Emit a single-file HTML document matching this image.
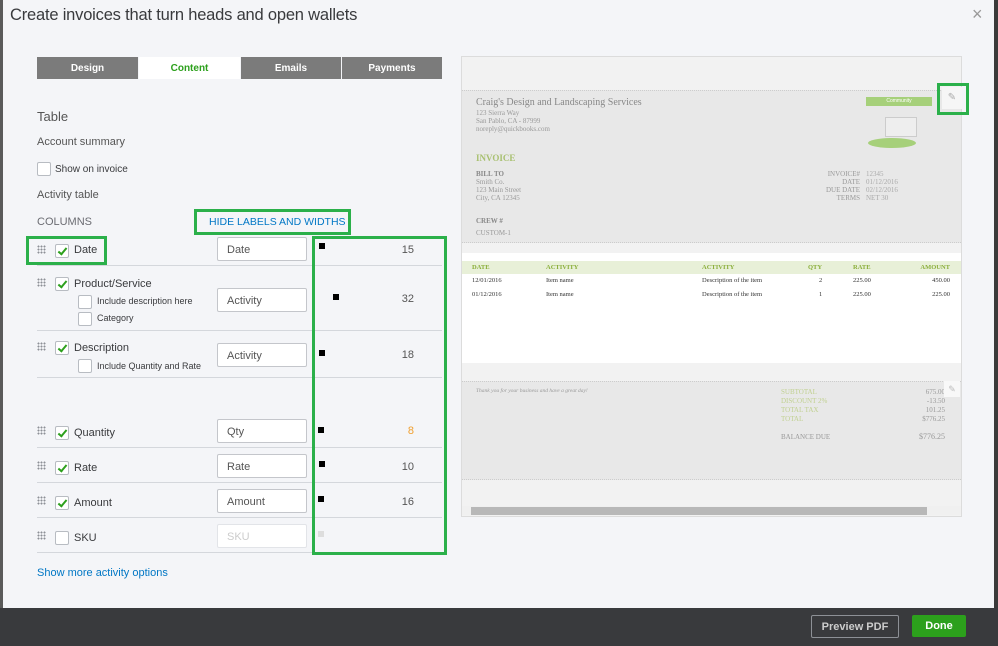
<!DOCTYPE html>
<html><head><meta charset="utf-8"><style>
*{box-sizing:border-box;margin:0;padding:0}
body{width:998px;height:646px;overflow:hidden;background:#f4f5f8;font-family:"Liberation Sans",sans-serif;position:relative;color:#393a3d}
.a{position:absolute}
.t{font-size:11px;color:#393a3d;white-space:nowrap}
.cb{position:absolute;width:14px;height:14px;border:1px solid #b8bcc2;background:#fff;border-radius:2px}
.cb.on::after{content:"";position:absolute;left:4px;top:1px;width:3px;height:7px;border:solid #2ca01c;border-width:0 2px 2px 0;transform:rotate(40deg)}
.drag{position:absolute;width:9px;height:9px;background-image:radial-gradient(circle,#8d9096 0.9px,transparent 1.1px);background-size:3px 3px}
.inp{position:absolute;left:217px;width:90px;height:24px;background:#fff;border:1px solid #c4c6cb;border-radius:2px;font-size:11px;color:#555;padding:6px 0 0 9px}
.sep{position:absolute;left:37px;width:405px;height:1px;background:#d4d7dc}
.sq{position:absolute;width:6px;height:6px;background:#000}
.num{position:absolute;left:380px;width:34px;text-align:right;font-size:11px;color:#555}
.gb{position:absolute;border:3px solid #2bb04a}
.sv{font-family:"Liberation Serif",serif;position:absolute;white-space:nowrap}
.tab{position:absolute;top:57px;height:22px;width:100px;background:#7b7b7b;color:#fff;text-align:center;font-size:10px;font-weight:bold;padding-top:6px}
</style></head><body>
<div class="a" style="left:0;top:0;width:3px;height:608px;background:#5a5a5a"></div>
<div class="a" style="left:994px;top:0;width:4px;height:608px;background:#3a3a3a"></div>
<div class="a" style="left:10px;top:6px;font-size:16.5px;color:#393a3d;letter-spacing:-0.2px">Create invoices that turn heads and open wallets</div>
<div class="a" style="left:972px;top:4px;font-size:18px;color:#999">×</div>

<div class="tab" style="left:37px;width:101px">Design</div>
<div class="tab" style="left:139px;width:101px;background:#fff;color:#2ca01c">Content</div>
<div class="tab" style="left:241px">Emails</div>
<div class="tab" style="left:342px">Payments</div>

<div class="a" style="left:37px;top:109px;font-size:13px;color:#555">Table</div>
<div class="a t" style="left:37px;top:136px;color:#555">Account summary</div>
<div class="cb" style="left:37px;top:162px"></div>
<div class="a t" style="left:55px;top:164px;font-size:10px">Show on invoice</div>
<div class="a t" style="left:37px;top:189px;color:#555">Activity table</div>
<div class="a t" style="left:37px;top:216px;color:#6b6c72">COLUMNS</div>
<div class="gb" style="left:194px;top:209px;width:157px;height:26px"></div>
<div class="a t" style="left:209px;top:216px;color:#0077c5;font-size:10.5px">HIDE LABELS AND WIDTHS</div>

<div class="gb" style="left:26px;top:236px;width:81px;height:29px"></div>
<div class="drag" style="left:37px;top:245px"></div>
<div class="cb on" style="left:55px;top:244px"></div>
<div class="a t" style="left:74px;top:244px">Date</div>
<div class="inp" style="top:237px">Date</div>
<div class="sq" style="left:319px;top:243px"></div><div class="num" style="top:244px">15</div>
<div class="sep" style="top:265px"></div>

<div class="drag" style="left:37px;top:278px"></div>
<div class="cb on" style="left:55px;top:277px"></div>
<div class="a t" style="left:74px;top:278px">Product/Service</div>
<div class="cb" style="left:78px;top:295px"></div>
<div class="a t" style="left:97px;top:296px;font-size:9px">Include description here</div>
<div class="cb" style="left:78px;top:312px"></div>
<div class="a t" style="left:97px;top:313px;font-size:9px">Category</div>
<div class="inp" style="top:288px">Activity</div>
<div class="sq" style="left:333px;top:294px"></div><div class="num" style="top:293px">32</div>
<div class="sep" style="top:330px"></div>

<div class="drag" style="left:37px;top:342px"></div>
<div class="cb on" style="left:55px;top:341px"></div>
<div class="a t" style="left:74px;top:342px">Description</div>
<div class="cb" style="left:78px;top:359px"></div>
<div class="a t" style="left:97px;top:361px;font-size:9px">Include Quantity and Rate</div>
<div class="inp" style="top:343px">Activity</div>
<div class="sq" style="left:319px;top:350px"></div><div class="num" style="top:349px">18</div>
<div class="sep" style="top:377px"></div>

<div class="drag" style="left:37px;top:426px"></div>
<div class="cb on" style="left:55px;top:426px"></div>
<div class="a t" style="left:74px;top:427px">Quantity</div>
<div class="inp" style="top:419px">Qty</div>
<div class="sq" style="left:318px;top:427px"></div><div class="num" style="top:425px;color:#f0a030">8</div>
<div class="sep" style="top:447px"></div>

<div class="drag" style="left:37px;top:461px"></div>
<div class="cb on" style="left:55px;top:461px"></div>
<div class="a t" style="left:74px;top:462px">Rate</div>
<div class="inp" style="top:454px">Rate</div>
<div class="sq" style="left:319px;top:461px"></div><div class="num" style="top:461px">10</div>
<div class="sep" style="top:482px"></div>

<div class="drag" style="left:37px;top:496px"></div>
<div class="cb on" style="left:55px;top:496px"></div>
<div class="a t" style="left:74px;top:497px">Amount</div>
<div class="inp" style="top:489px">Amount</div>
<div class="sq" style="left:318px;top:496px"></div><div class="num" style="top:496px">16</div>
<div class="sep" style="top:517px"></div>

<div class="drag" style="left:37px;top:531px"></div>
<div class="cb" style="left:55px;top:531px"></div>
<div class="a t" style="left:74px;top:532px">SKU</div>
<div class="inp" style="top:524px;color:#ccc;border-color:#e2e4e8">SKU</div>
<div class="sq" style="left:318px;top:531px;background:#ddd"></div>
<div class="sep" style="top:552px"></div>
<div class="gb" style="left:312px;top:236px;width:135px;height:319px"></div>
<div class="a t" style="left:37px;top:567px;color:#0077c5">Show more activity options</div>

<div class="a" style="left:461px;top:56px;width:501px;height:461px;background:#f2f2f2;border:1px solid #dcdcdc">
 <div class="a" style="left:0;top:33px;width:499px;height:153px;background:#e8e8e8;border-top:1px dotted #ccc;border-bottom:1px dotted #ccc"></div>
 <div class="a" style="left:0;top:196px;width:499px;height:110px;background:#fff"></div>
 <div class="a" style="left:0;top:204px;width:499px;height:13px;background:#e8f0d8"></div>
 <div class="a" style="left:0;top:324px;width:499px;height:99px;background:#e8e8e8;border-top:1px dotted #ccc;border-bottom:1px dotted #ccc"></div>
 <div class="a" style="left:0;top:449px;width:499px;height:9px;background:#f0f0f0"></div>
 <div class="a" style="left:9px;top:450px;width:456px;height:8px;background:#b8b8b8"></div>
</div>
<div class="sv" style="left:476px;top:97px;font-size:10px;color:#888">Craig's Design and Landscaping Services</div>
<div class="sv" style="left:476px;top:109px;font-size:7px;color:#999;line-height:8px">123 Sierra Way<br>San Pablo, CA - 87999<br>noreply@quickbooks.com</div>
<div class="sv" style="left:476px;top:153px;font-size:9px;color:#a8c070;font-weight:bold">INVOICE</div>
<div class="sv" style="left:476px;top:170px;font-size:7px;color:#999;line-height:8px"><b style="color:#888">BILL TO</b><br>Smith Co.<br>123 Main Street<br>City, CA 12345</div>
<div class="sv" style="left:476px;top:215px;font-size:7px;color:#999;line-height:12px"><b style="color:#888">CREW #</b><br>CUSTOM-1</div>
<div class="sv" style="left:818px;top:170px;font-size:7px;color:#999;line-height:8px;text-align:right;width:42px">INVOICE#<br>DATE<br>DUE DATE<br>TERMS</div>
<div class="sv" style="left:866px;top:170px;font-size:7px;color:#aaa;line-height:8px">12345<br>01/12/2016<br>02/12/2016<br>NET 30</div>
<div class="a" style="left:866px;top:97px;width:66px;height:9px;background:#a6d07a;font-size:5px;color:#fff;text-align:center;line-height:9px">Community</div>
<div class="a" style="left:868px;top:138px;width:48px;height:10px;border-radius:50%;background:#a6d07a"></div>
<div class="a" style="left:885px;top:117px;width:32px;height:20px;border:1px solid #ccc;background:#eee"></div>
<div class="a" style="left:942px;top:87px;width:20px;height:22px;background:#f6f6f6;color:#aaa;font-size:10px;text-align:center;line-height:22px">✎</div>
<div class="gb" style="left:937px;top:83px;width:32px;height:32px"></div>
<div class="sv" style="left:472px;top:264px;width:478px;font-size:6.5px;color:#8aae3a;font-weight:bold">
<span class="a" style="left:0">DATE</span><span class="a" style="left:74px">ACTIVITY</span><span class="a" style="left:230px">ACTIVITY</span><span class="a" style="left:336px">QTY</span><span class="a" style="left:381px">RATE</span><span class="a" style="right:0">AMOUNT</span></div>
<div class="sv" style="left:472px;top:277px;width:478px;font-size:6.5px;color:#333">
<span class="a" style="left:0">12/01/2016</span><span class="a" style="left:74px">Item name</span><span class="a" style="left:230px">Description of the item</span><span class="a" style="left:347px">2</span><span class="a" style="left:381px">225.00</span><span class="a" style="right:0">450.00</span></div>
<div class="sv" style="left:472px;top:291px;width:478px;font-size:6.5px;color:#333">
<span class="a" style="left:0">01/12/2016</span><span class="a" style="left:74px">Item name</span><span class="a" style="left:230px">Description of the item</span><span class="a" style="left:347px">1</span><span class="a" style="left:381px">225.00</span><span class="a" style="right:0">225.00</span></div>
<div class="sv" style="left:476px;top:388px;font-size:5.5px;color:#999;font-style:italic">Thank you for your business and have a great day!</div>
<div class="sv" style="left:781px;top:388px;font-size:7px;color:#c0d090;line-height:9px">SUBTOTAL<br>DISCOUNT 2%<br>TOTAL TAX<br>TOTAL</div>
<div class="sv" style="left:905px;top:388px;width:40px;text-align:right;font-size:7px;color:#999;line-height:9px">675.00<br>-13.50<br>101.25<br>$776.25</div>
<div class="sv" style="left:781px;top:433px;font-size:7px;color:#999">BALANCE DUE</div>
<div class="sv" style="left:905px;top:432px;width:40px;text-align:right;font-size:8px;color:#999">$776.25</div>
<div class="a" style="left:944px;top:381px;width:16px;height:16px;background:#f8f8f8;color:#bbb;font-size:9px;text-align:center;line-height:16px">✎</div>

<div class="a" style="left:0;top:608px;width:998px;height:38px;background:#393a3d"></div>
<div class="a" style="left:811px;top:615px;width:88px;height:23px;border:1px solid #8d9096;border-radius:2px;color:#ccc;font-size:11px;font-weight:bold;text-align:center;padding-top:5px">Preview PDF</div>
<div class="a" style="left:912px;top:615px;width:54px;height:22px;background:#2ca01c;border-radius:2px;color:#fff;font-size:11px;font-weight:bold;text-align:center;padding-top:5px">Done</div>
</body></html>
